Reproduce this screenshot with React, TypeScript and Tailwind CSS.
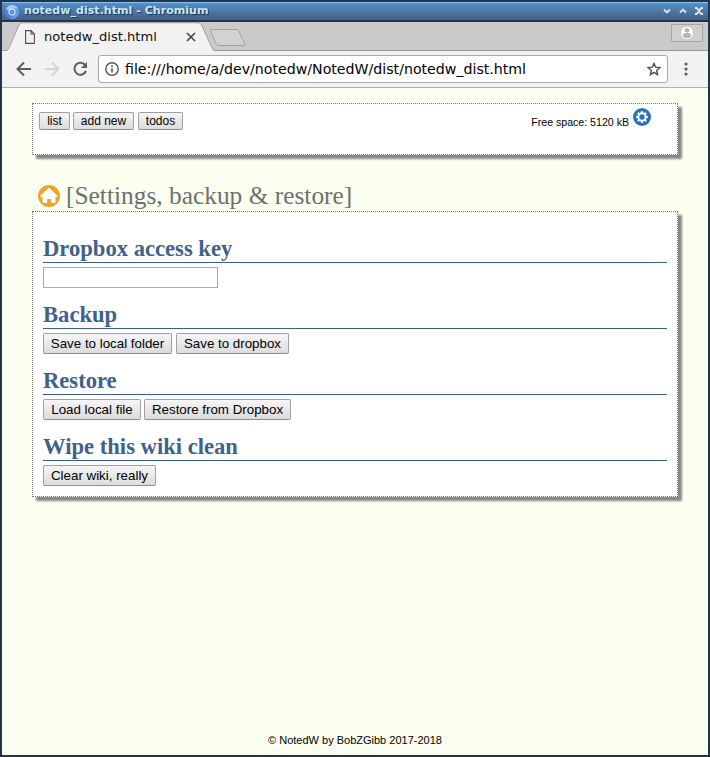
import React from "react";

const dejavu = "font-['DejaVu_Sans',sans-serif]";
const arial = "font-['Liberation_Sans',Arial,sans-serif]";
const serif = "font-['Liberation_Serif','Times_New_Roman',serif]";

function Btn({ children, className }: { children: React.ReactNode; className: string }) {
  return (
    <button
      className={`${arial} shrink-0 whitespace-nowrap rounded-[2px] border border-[#a0a0a0] border-b-[#8f8f8f] bg-linear-to-b from-[#f6f6f6] to-[#dcdcdc] text-center text-black ${className}`}
    >
      {children}
    </button>
  );
}

function TitleBar() {
  return (
    <div className="flex h-[18px] items-center border-t border-[#7cc4ff] bg-linear-to-b from-[#5c8fc2] to-[#416088] pl-[3px] pr-[4px]">
      <svg width="14" height="14" viewBox="0 0 14 14" className="shrink-0">
        <circle cx="7" cy="7" r="7" fill="#6a9bea" />
        <path d="M7 7L1 3.5A7 7 0 0 1 13 3.5H7Z" fill="#a5c8fb" />
        <path d="M7 7L4 9L1 3.5A7 7 0 0 0 6 13.9L9 9Z" fill="#4d80dd" />
        <circle cx="7" cy="7" r="3.5" fill="#e7f0ff" />
        <circle cx="7" cy="7" r="2.6" fill="#5f91ea" />
      </svg>
      <span className={`${dejavu} ml-[5px] mt-[-1px] whitespace-nowrap text-[11.080px] font-bold leading-[16px] text-[#c3e9ff] [text-shadow:1px_1px_1px_#1c3048]`}>
        notedw_dist.html - Chromium
      </span>
      <svg width="42" height="10" viewBox="0 0 42 10" fill="none" stroke="#dce6f0" strokeWidth="1.8" className="ml-auto mt-[-1px]">
        <path d="M2 3.500L5 6.500L8 3.500" />
        <path d="M18 6.500L21 3.500L24 6.500" />
        <path d="M33 2H34.500L37 4.500L39.500 2H41M33 8H34.500L37 5.500L39.500 8H41" />
      </svg>
    </div>
  );
}

function TabStrip() {
  return (
    <div className="relative h-[29px] bg-[#cacaca]">
      <svg width="706" height="29" viewBox="0 0 706 29" className="absolute left-0 top-0">
        <path d="M0 28.5H706" stroke="#999" />
        <path d="M5 29L17 3Q18.2 1 20 1H196Q198.500 1 199.500 3L211 28L212 29Z" fill="#f2f2f2" />
        <path d="M0 28.500H4Q6 28 7 26L17 3Q18 .8 20 .8H196Q198.500 .8 199.500 3L210 26Q211 28.500 213 28.500" fill="none" stroke="#a0a0a0" />
        <path d="M210 7.500H234Q236 7.500 237 9.500L242.500 21Q243.500 23.500 241 23.500H217Q215 23.500 214 21.500L209 10Q208 7.500 210 7.500Z" fill="#d2d2d2" stroke="#a0a0a0" />
      </svg>
      <div className="relative flex h-[28px] items-center pl-[23px]">
        <svg width="10" height="14" viewBox="0 0 10 14" fill="none" stroke="#505050" strokeWidth="1.1" className="mt-[2px]">
          <path d="M.6 .6H6L9.400 4V13.400H.6ZM6 .6V4H9.400" />
        </svg>
        <span className={`${dejavu} ml-[9px] mt-[2px] w-[142px] whitespace-nowrap text-[13.080px] leading-[16px] text-[#111]`}>notedw_dist.html</span>
        <svg width="10" height="10" viewBox="0 0 10 10" stroke="#444" strokeWidth="1.6" className="mt-[2px]">
          <path d="M1 1L9 9M9 1L1 9" />
        </svg>
        <div className="ml-auto mr-[5px] mt-[-6px] flex h-[18px] w-[32px] items-center justify-center rounded-[1px] border border-[#a6a6a6] bg-[#d0d0d0]">
          <svg width="14" height="14" viewBox="0 0 14 14">
            <circle cx="7" cy="7" r="6.700" fill="#fff" stroke="#b0b0b0" strokeWidth=".6" />
            <circle cx="7" cy="4.300" r="1.800" fill="#bbb" stroke="#999" strokeWidth=".8" />
            <ellipse cx="7" cy="9.500" rx="3.800" ry="2" fill="#bbb" stroke="#999" strokeWidth=".8" />
          </svg>
        </div>
      </div>
    </div>
  );
}

function Toolbar() {
  return (
    <div className="flex h-[37px] items-center border-b border-[#b0b0b0] bg-[#f2f2f2] pl-[14px]">
      <svg width="76" height="16" viewBox="0 0 76 16" fill="none" strokeWidth="2" className="shrink-0">
        <path d="M15 8H2M8 1.500L1.500 8L8 14.500" stroke="#5a5d61" />
        <path d="M29 8H42M36 1.500L42.500 8L36 14.500" stroke="#d3d5d7" />
        <path d="M69.500 4.500A6 6 0 1 0 70 10" stroke="#5a5d61" />
        <path d="M71 1V7H65Z" fill="#5a5d61" />
      </svg>
      <div className="ml-[6px] flex h-[28px] w-[570px] items-center rounded-[3px] border border-[#a9a9a9] bg-white pl-[6px] pr-[6px]">
        <svg width="14" height="14" viewBox="0 0 14 14" fill="none" stroke="#555" strokeWidth="1.400" className="shrink-0">
          <circle cx="7" cy="7" r="6.200" />
          <path d="M7 6.200V10.500M7 3.300V5" strokeWidth="1.600" />
        </svg>
        <span className={`${dejavu} ml-[6px] whitespace-nowrap text-[14.160px] leading-[20px] text-black`}>
          file:///home/a/dev/notedw/NotedW/dist/notedw_dist.html
        </span>
        <svg width="14" height="14" viewBox="0 0 14 14" fill="none" stroke="#4b4d50" strokeWidth="1.400" className="ml-auto shrink-0">
          <path d="M7 1.400L8.600 5.200L12.900 5.600L9.700 8.400L10.600 12.700L7 10.400L3.400 12.700L4.300 8.400L1.100 5.600L5.400 5.200Z" />
        </svg>
      </div>
      <svg width="4" height="14" viewBox="0 0 4 14" fill="#5a5d61" className="ml-[16px]">
        <circle cx="2" cy="2" r="1.600" />
        <circle cx="2" cy="7" r="1.600" />
        <circle cx="2" cy="12" r="1.600" />
      </svg>
    </div>
  );
}

function Gear() {
  return (
    <svg width="18" height="18" viewBox="0 0 18 18" className="mt-[-11px] ml-[4px]">
      <circle cx="9" cy="9" r="9" fill="#2a72b9" />
      <circle cx="9" cy="9" r="3.700" fill="none" stroke="#fff" strokeWidth="2" />
      <g stroke="#fff" strokeWidth="2.200">
        <path d="M9 3.200V5M9 13V14.800M3.200 9H5M13 9H14.800M4.900 4.900L6.200 6.200M11.800 11.800L13.100 13.100M4.900 13.100L6.200 11.800M11.800 6.200L13.100 4.900" />
      </g>
    </svg>
  );
}

function Section({ title, children }: { title: string; children: React.ReactNode }) {
  return (
    <section className="h-[66px]">
      <h2 className={`${serif} h-[30px] whitespace-nowrap border-b border-[#3c5f87] text-[22.620px] font-bold leading-[32px] text-[#3f628a]`}>{title}</h2>
      <div className="mt-[4px] flex">{children}</div>
    </section>
  );
}

const panel = "border border-dotted border-[#777] bg-white shadow-[4px_4px_2px_#888]";

export default function App() {
  return (
    <div className="flex h-[757px] w-[710px] flex-col overflow-hidden border-2 border-[#243547] bg-[#fbfff0]">
      <TitleBar />
      <div className="h-[2px] bg-[#243547]" />
      <TabStrip />
      <Toolbar />
      <main className="flex grow flex-col px-[30px] pt-[15px]">
        <div className={`${panel} flex h-[52px] items-start pl-[6px] pt-[8px]`}>
          <Btn className="h-[18px] w-[31px] text-[12px] leading-[17px]">list</Btn>
          <Btn className="ml-[3px] h-[18px] w-[61px] text-[12px] leading-[17px]">add new</Btn>
          <Btn className="ml-[4px] h-[18px] w-[45px] text-[12px] leading-[17px]">todos</Btn>
          <div className="ml-auto mr-[26px] mt-px flex h-[18px] items-center">
            <span className={`${arial} whitespace-nowrap text-[10.600px] leading-[16px] text-black`}>Free space: 5120 kB</span>
            <Gear />
          </div>
        </div>
        <div className="mt-[24px] flex h-[32px] items-center pl-[6px]">
          <svg width="22" height="22" viewBox="0 0 22 22" className="mt-[2px]">
            <circle cx="11" cy="11" r="11" fill="#f0a22b" />
            <path d="M11 3L2.500 11.300H5V17.500H9V13.500H13V17.500H17V11.300H19.500Z" fill="#fff" stroke="#fff" strokeLinejoin="round" />
            <path d="M9.200 14H12.800V18H9.200Z" fill="#f0a22b" />
          </svg>
          <h1 className={`${serif} ml-[6px] whitespace-nowrap text-[25.400px] leading-[32px] text-[#706f6f]`}>[Settings, backup &amp; restore]</h1>
        </div>
        <div className={`${panel} h-[286px] px-[10px] pt-[21px]`}>
          <Section title="Dropbox access key">
            <input className="h-[21px] w-[175px] border border-[#a9a9a9] bg-white" />
          </Section>
          <Section title="Backup">
            <Btn className="h-[21px] w-[129px] text-[13.333px] leading-[19px]">Save to local folder</Btn>
            <Btn className="ml-[4px] h-[21px] w-[113px] text-[13.333px] leading-[19px]">Save to dropbox</Btn>
          </Section>
          <Section title="Restore">
            <Btn className="h-[21px] w-[98px] text-[13.333px] leading-[19px]">Load local file</Btn>
            <Btn className="ml-[3px] h-[21px] w-[147px] text-[13.333px] leading-[19px]">Restore from Dropbox</Btn>
          </Section>
          <Section title="Wipe this wiki clean">
            <Btn className="h-[21px] w-[113px] text-[13.333px] leading-[19px]">Clear wiki, really</Btn>
          </Section>
        </div>
        <footer className={`${arial} mb-[7px] mt-auto text-center text-[11px] leading-[15px] text-black`}>© NotedW by BobZGibb 2017-2018</footer>
      </main>
    </div>
  );
}
